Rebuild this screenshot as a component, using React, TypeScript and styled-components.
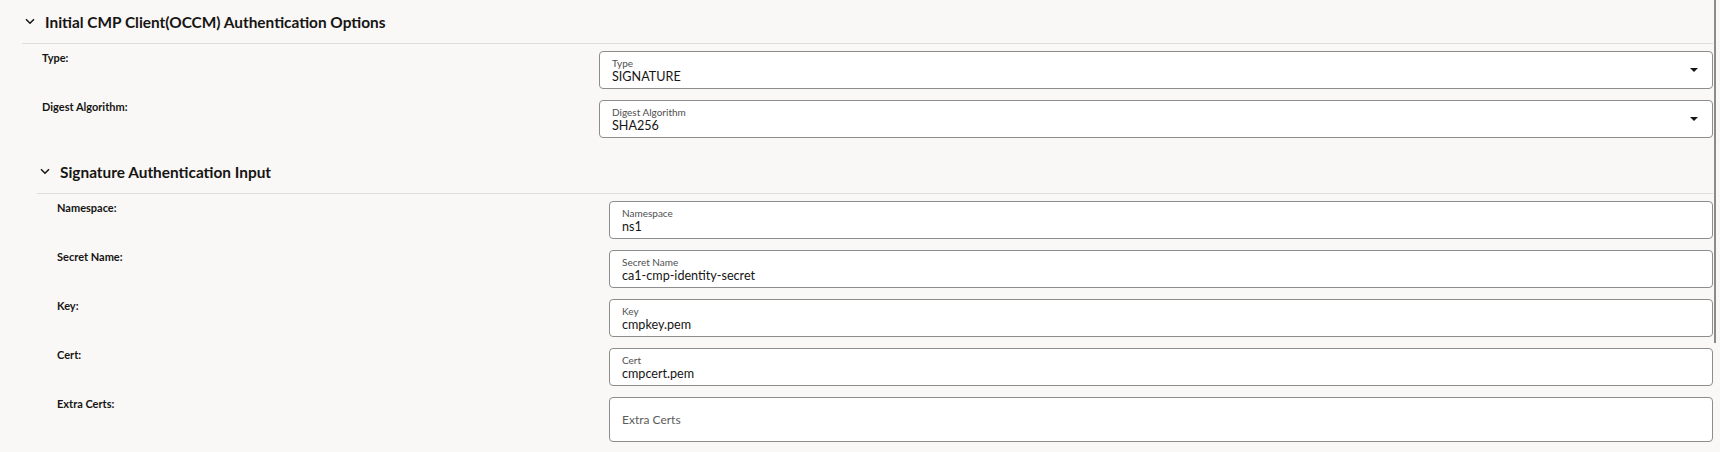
import styled, { createGlobalStyle } from "styled-components";

const GlobalStyle = createGlobalStyle`
  html, body {
    margin: 0;
    padding: 0;
    background: #f9f8f6;
  }
  body {
    font-family: Lato, "Noto Sans", sans-serif;
    color: #161513;
  }
`;

// whole page: content + scrollbar strip
const Frame = styled.div`
  display: flex;
  height: 452px;
  overflow: hidden;
`;

const Content = styled.main`
  flex: 1;
  min-width: 0;
  padding-left: 22px;
`;

const ScrollTrack = styled.div`
  width: 7px;
  padding-left: 1px;
  box-sizing: border-box;
`;

const ScrollThumb = styled.div`
  width: 2px;
  height: 343px;
  background: #8b8b8b;
`;

// collapsible section
const Section = styled.section<{ $indent?: number }>`
  margin-left: ${(p) => p.$indent ?? 0}px;
`;

const Header = styled.div`
  display: flex;
  align-items: center;
  gap: 10px;
  height: 43px;
  padding-left: 3px;
  border-bottom: 1px solid #dfddda;
`;

const Title = styled.h2`
  margin: 0;
  font-size: 15.4px;
  font-weight: 700;
  color: #161513;
`;

const Body = styled.div`
  padding: 7px 0 1px;
`;

// one form line: label column + field column
const Row = styled.div`
  display: grid;
  grid-template-columns: 1fr 2fr;
  padding-left: 20px;
  margin-bottom: 11px;
`;

const RowLabel = styled.div`
  font-size: 11px;
  line-height: 14px;
  font-weight: 700;
  color: #161513;
`;

const Field = styled.div<{ $tall?: boolean }>`
  display: flex;
  align-items: center;
  height: ${(p) => (p.$tall ? 45 : 38)}px;
  box-sizing: border-box;
  background: #fff;
  border: 1px solid #8d8d8d;
  border-radius: 4px;
  padding: 0 14px 0 12px;
`;

const FieldText = styled.div`
  flex: 1;
  display: flex;
  flex-direction: column;
  align-self: stretch;
  padding-top: 5px;
`;

const FieldLabel = styled.span`
  font-size: 10px;
  line-height: 12px;
  color: #4f4f4f;
`;

const FieldValue = styled.span`
  font-size: 12.6px;
  line-height: 16px;
  color: #161513;
`;

const Placeholder = styled.span`
  flex: 1;
  font-size: 12px;
  color: #5c5c5c;
`;

const Caret = styled.span`
  width: 0;
  height: 0;
  border-left: 4px solid transparent;
  border-right: 4px solid transparent;
  border-top: 4px solid #161513;
`;

function Chevron() {
  return (
    <svg width="10" height="7" viewBox="0 0 10 7">
      <polyline
        points="1,1.2 5,5.2 9,1.2"
        fill="none"
        stroke="#161513"
        strokeWidth="1.5"
      />
    </svg>
  );
}

type Item = { label: string; hint: string; value?: string; select?: boolean };

const occm: Item[] = [
  { label: "Type:", hint: "Type", value: "SIGNATURE", select: true },
  { label: "Digest Algorithm:", hint: "Digest Algorithm", value: "SHA256", select: true },
];

const signature: Item[] = [
  { label: "Namespace:", hint: "Namespace", value: "ns1" },
  { label: "Secret Name:", hint: "Secret Name", value: "ca1-cmp-identity-secret" },
  { label: "Key:", hint: "Key", value: "cmpkey.pem" },
  { label: "Cert:", hint: "Cert", value: "cmpcert.pem" },
  { label: "Extra Certs:", hint: "Extra Certs" },
];

function FormRow({ item }: { item: Item }) {
  return (
    <Row>
      <RowLabel>{item.label}</RowLabel>
      {item.value ? (
        <Field>
          <FieldText>
            <FieldLabel>{item.hint}</FieldLabel>
            <FieldValue>{item.value}</FieldValue>
          </FieldText>
          {item.select && <Caret />}
        </Field>
      ) : (
        <Field $tall>
          <Placeholder>{item.hint}</Placeholder>
        </Field>
      )}
    </Row>
  );
}

export default function App() {
  return (
    <>
      <GlobalStyle />
      <Frame>
        <Content>
          <Section>
            <Header>
              <Chevron />
              <Title>Initial CMP Client(OCCM) Authentication Options</Title>
            </Header>
            <Body>
              {occm.map((it) => (
                <FormRow key={it.label} item={it} />
              ))}
            </Body>
          </Section>
          <Section $indent={15}>
            <Header>
              <Chevron />
              <Title>Signature Authentication Input</Title>
            </Header>
            <Body>
              {signature.map((it) => (
                <FormRow key={it.label} item={it} />
              ))}
            </Body>
          </Section>
        </Content>
        <ScrollTrack>
          <ScrollThumb />
        </ScrollTrack>
      </Frame>
    </>
  );
}
